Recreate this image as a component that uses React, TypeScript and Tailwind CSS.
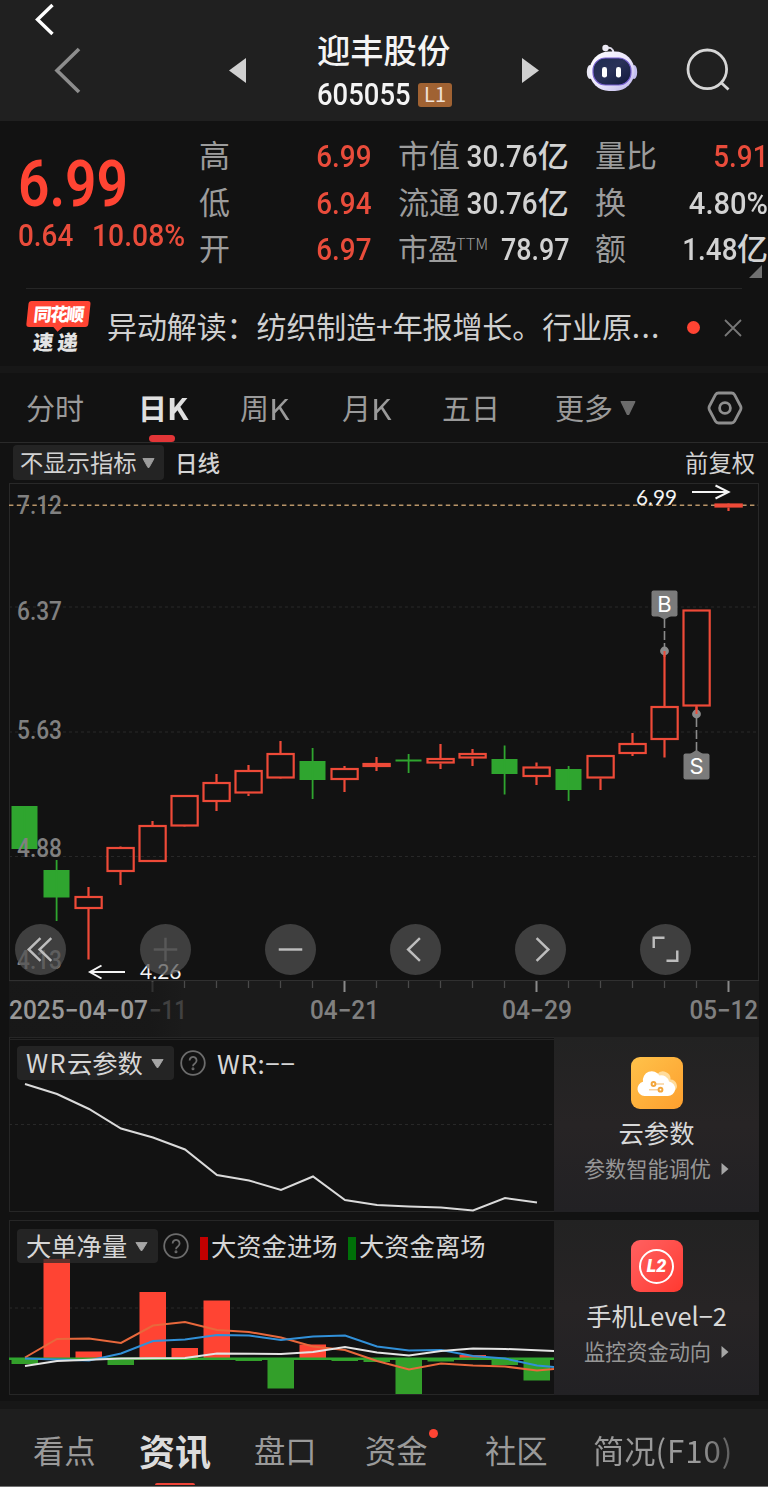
import React from 'react';

interface Candle {
     up: boolean;
     top: number;
     bottom: number;
     high: number;
     low: number;
}

interface NumProps {
     children: React.ReactNode;
     className?: string;
}

const STEP = 32;
const FIRST_X = 24.5;

const candles: Candle[] = [
     { up: false, top: 806, bottom: 849, high: 806, low: 849 },
     { up: false, top: 870, bottom: 897.5, high: 860, low: 921 },
     { up: true, top: 896, bottom: 909, high: 887, low: 959.5 },
     { up: true, top: 847, bottom: 872, high: 846.5, low: 885 },
     { up: true, top: 825, bottom: 862, high: 821, low: 862 },
     { up: true, top: 795, bottom: 826.5, high: 795, low: 826 },
     { up: true, top: 782, bottom: 802, high: 774, low: 811 },
     { up: true, top: 770, bottom: 793.5, high: 765, low: 796 },
     { up: true, top: 753, bottom: 778.5, high: 741, low: 779 },
     { up: false, top: 761, bottom: 780, high: 748, low: 799 },
     { up: true, top: 768, bottom: 780, high: 766, low: 792 },
     { up: true, top: 763, bottom: 767, high: 757, low: 771 },
     { up: false, top: 759.5, bottom: 761.5, high: 754, low: 773 },
     { up: true, top: 758, bottom: 763.5, high: 744, low: 769 },
     { up: true, top: 753, bottom: 758.5, high: 749, low: 766 },
     { up: false, top: 759, bottom: 774, high: 745.5, low: 794.5 },
     { up: true, top: 766.5, bottom: 777, high: 762.5, low: 785 },
     { up: false, top: 769, bottom: 790, high: 766, low: 801 },
     { up: true, top: 755, bottom: 778.5, high: 755, low: 790 },
     { up: true, top: 743, bottom: 754, high: 733, low: 756 },
     { up: true, top: 706, bottom: 740, high: 651, low: 757.5 },
     { up: true, top: 609.5, bottom: 706.5, high: 609.5, low: 714 },
     { up: true, top: 503.5, bottom: 507.5, high: 504, low: 511 },
];

const priceLabels = [
     { text: '7.12', y: 513.5 },
     { text: '6.37', y: 620 },
     { text: '5.63', y: 738.5 },
     { text: '4.88', y: 857 },
     { text: '4.13', y: 969 },
];

// bar edge away from the zero line
const flowBars = [1364, 1259, 1351.5, 1365, 1292, 1348, 1300.5, 1361, 1388.5, 1344.5, 1361, 1362, 1394, 1361.5, 1355, 1365, 1380.5];

const RED = '#ff4433';
const CANDLE_RED = '#ee4a38';
const GREEN = '#2fa52f';

const Num: React.FC<NumProps> = ({ children, className = '' }) => (
     <span className={`inline-block font-[Roboto,sans-serif] font-medium leading-none ${className}`}>{children}</span>
);

const Triangle: React.FC<{ className: string }> = ({ className }) => (
     <svg viewBox="0 0 14 10" preserveAspectRatio="none" className={className}>
          <path d="M1 0.5H13L7.6 9.5H6.4Z" fill="currentColor" stroke="currentColor" strokeLinejoin="round" />
     </svg>
);

const Help = () => (
     <svg viewBox="0 0 26 26" className="h-[26px] w-[26px] shrink-0 text-[#6c6c6c]" fill="none" stroke="currentColor" strokeWidth="1.8">
          <circle cx="13" cy="13" r="11.8" />
          <path d="M9.6 10.4a3.5 3.5 0 1 1 5.3 3c-1.3.8-1.9 1.3-1.9 2.8" />
          <circle cx="13" cy="18.8" r="0.6" />
     </svg>
);

const Robot = () => (
     <svg viewBox="0 0 52 50" className="h-[50px] w-[52px]">
          <defs>
               <linearGradient id="shell" x1="0" y1="0" x2="1" y2="1">
                    <stop offset="0" stopColor="#ffffff" />
                    <stop offset="0.55" stopColor="#e9e4fb" />
                    <stop offset="1" stopColor="#b9b2ea" />
               </linearGradient>
               <linearGradient id="visor" x1="0" y1="0" x2="1" y2="1">
                    <stop offset="0" stopColor="#1c2b4e" />
                    <stop offset="0.45" stopColor="#2a3158" />
                    <stop offset="1" stopColor="#10183c" />
               </linearGradient>
          </defs>
          <path d="M20 5c4-1 7 0 7.5 5" fill="none" stroke="#dedbe9" strokeWidth="2" />
          <circle cx="19.5" cy="5" r="3.2" fill="#eceaf5" />
          <ellipse cx="4" cy="29" rx="3.2" ry="7" fill="#e9e8f5" />
          <ellipse cx="48" cy="29" rx="3.2" ry="7" fill="#c4bff0" />
          <rect x="3.5" y="8.5" width="45" height="39.5" rx="19.5" fill="url(#shell)" />
          <rect x="7" y="15" width="38" height="27" rx="12.5" fill="url(#visor)" stroke="#765fd0" strokeWidth="1.2" />
          <rect x="16" y="24" width="5" height="10.5" rx="2.3" fill="#fff" />
          <rect x="30" y="24" width="5" height="10.5" rx="2.3" fill="#fff" />
     </svg>
);

const Header = () => (
     <header className="relative flex h-[121px] bg-[#202020]">
          <svg viewBox="0 0 120 121" className="h-[121px] w-[120px]" fill="none">
               <path d="M52.5 5L37.5 19.5L52.5 34" stroke="#fff" strokeWidth="3.4" />
               <path d="M79 49L57 70.5L79 92" stroke="#8d8d8d" strokeWidth="3.6" />
          </svg>
          <div className="flex w-[526px] items-center pt-[20px]">
               <svg viewBox="0 0 17 25" className="ml-[109px] h-[25px] w-[17px]"><path d="M17 0V25L0 12.5Z" fill="#d0d0d0" /></svg>
               <div className="ml-[71px] flex w-[135px] flex-col pt-[3px]">
                    <div className="whitespace-nowrap text-[33.3px] font-medium leading-[44px] text-[#f4f4f4]">迎丰股份</div>
                    <div className="flex h-[46px] items-center pt-[2px]">
                         <Num className="w-[101px] origin-left scale-x-[0.9] pt-px text-[30.5px] text-[#f4f4f4]">605055</Num>
                         <span className="flex h-[24px] w-[34px] shrink-0 items-center justify-center rounded-[3px] bg-[#a06232] pb-[2px] text-[20px] leading-none text-[#f0e3d8]">L1</span>
                    </div>
               </div>
               <svg viewBox="0 0 17 25" className="ml-[70px] h-[25px] w-[17px]"><path d="M0 0V25L17 12.5Z" fill="#d0d0d0" /></svg>
          </div>
          <div className="absolute left-[586px] top-[43px] flex items-start gap-[48px]">
               <Robot />
               <svg viewBox="0 0 44 44" className="mt-[5px] h-[44px] w-[44px]" fill="none" stroke="#d6d6d6" strokeWidth="2.8">
                    <circle cx="21.3" cy="21.3" r="19.3" />
                    <path d="M35 34.5L42.5 41.5" />
               </svg>
          </div>
     </header>
);

const label = 'whitespace-nowrap pb-[5px] text-[31px] leading-none text-[#9c9c9c]';
const unit = 'pb-[5px] text-[31px] font-medium leading-none';
const cell = 'flex h-[46.5px] items-center justify-between';
const digits = 'origin-right scale-x-[0.87] text-[32px]';

const Quote = () => (
     <section className="relative flex h-[167px] pt-[12px] text-[#d2d2d2]">
          <div className="flex w-[199px] flex-col pl-[18px] text-[#ff4433]">
               <Num className="mt-[20px] h-[63px] origin-left scale-x-[0.86] text-[64px] font-semibold leading-[60px]">6.99</Num>
               <div className="mt-[3px] flex text-[#e94c3b]">
                    <Num className="w-[74px] origin-left scale-x-[0.87] text-[32px]">0.64</Num>
                    <Num className="origin-left scale-x-[0.885] text-[32px]">10.08%</Num>
               </div>
          </div>
          <div className="w-[172px]">
               <div className={cell}><span className={label}>高</span><Num className={`${digits} text-[#e94c3b]`}>6.99</Num></div>
               <div className={cell}><span className={label}>低</span><Num className={`${digits} text-[#e94c3b]`}>6.94</Num></div>
               <div className={cell}><span className={label}>开</span><Num className={`${digits} text-[#e94c3b]`}>6.97</Num></div>
          </div>
          <div className="ml-[27px] w-[171px]">
               {['市值', '流通'].map((name) => (
                    <div key={name} className="flex h-[46.5px] items-center">
                         <span className={`${label} w-[58px]`}>{name}</span>
                         <Num className={digits}>30.76</Num>
                         <span className={unit}>亿</span>
                    </div>
               ))}
               <div className={cell}>
                    <span className={`${label} flex w-[90px] items-start`}>
                         <span className="text-[30px]">市盈</span>
                         <span className="-ml-[2px] pt-[3px] text-[16.5px] font-light leading-[17px]">TTM</span>
                    </span>
                    <Num className="origin-right scale-x-[0.84] text-[32px]">78.97</Num>
               </div>
          </div>
          <div className="ml-[26px] w-[173px]">
               <div className={cell}><span className={label}>量比</span><Num className={`${digits} text-[#e94c3b]`}>5.91</Num></div>
               <div className={cell}><span className={label}>换</span><Num className="origin-right scale-x-[0.91] text-[32px]">4.80%</Num></div>
               <div className={cell}>
                    <span className={label}>额</span>
                    <span className="flex items-center"><Num className={digits}>1.48</Num><span className={unit}>亿</span></span>
               </div>
          </div>
          <svg viewBox="0 0 13 13" className="absolute bottom-[10px] right-[6px] h-[13px] w-[13px]"><path d="M13 0V13H0Z" fill="#707070" /></svg>
     </section>
);

const News = () => (
     <section className="mx-[26px] flex h-[78px] items-center border-t border-[#262626]">
          <div className="w-[62px] -skew-x-[6deg] pb-[2px]">
               <div className="relative flex h-[26px] items-center justify-center rounded-[3px] bg-[#ff4433]">
                    <span className="whitespace-nowrap pb-[2px] text-[18px] font-black leading-none tracking-[-1.6px] text-white">同花顺</span>
                    <span className="absolute -bottom-[3px] left-[28px] h-[8px] w-[8px] rotate-45 bg-[#ff4433]" />
               </div>
               <div className="mt-[4px] flex justify-center gap-[4px] text-[20.5px] font-black leading-[21px] text-[#e4e4e4]"><span>速</span><span>递</span></div>
          </div>
          <p className="ml-[19px] w-[560px] whitespace-nowrap pb-[5px] text-[30px] leading-none tracking-[-0.1px] text-[#d0d0d0]">异动解读：纺织制造+年报增长。行业原<span className="tracking-[1.2px]">...</span></p>
          <span className="ml-[20px] h-[13px] w-[13px] shrink-0 rounded-full bg-[#ff4433]" />
          <svg viewBox="0 0 18 18" className="ml-auto h-[18px] w-[18px]" stroke="#777" strokeWidth="1.8"><path d="M1 1L17 17M17 1L1 17" /></svg>
     </section>
);

const Tabs = () => (
     <nav className="flex h-[70px] items-center whitespace-nowrap border-b border-[#2a2a2a] pl-[26px] text-[29px] leading-none text-[#9a9a9a]">
          <span className="w-[112px]">分时</span>
          <span className="relative w-[102px] font-bold text-[#e0e0e0]">
               日<span className="inline-block origin-left scale-x-[1.08]">K</span>
               <span className="absolute -bottom-[20px] left-[11px] h-[7px] w-[26px] rounded-full bg-[#e23537]" />
          </span>
          <span className="w-[102px]">周<span className="inline-block origin-left scale-x-[1.1]">K</span></span>
          <span className="w-[100px]">月<span className="inline-block origin-left scale-x-[1.1]">K</span></span>
          <span className="w-[113px]">五日</span>
          <span className="flex w-[152px] items-center">更多<Triangle className="ml-[7px] h-[14px] w-[16px] text-[#6c6c6c]" /></span>
          <svg viewBox="0 0 36 34" className="h-[34px] w-[36px]" fill="none" stroke="#8e8e8e" strokeWidth="2.8" strokeLinejoin="round">
               <path d="M11.5 2H24.5Q26.5 2 27.5 3.7L33.5 15Q34.5 17 33.5 19L27.5 30.3Q26.5 32 24.5 32H11.5Q9.5 32 8.5 30.3L2.5 19Q1.5 17 2.5 15L8.5 3.7Q9.5 2 11.5 2Z" />
               <circle cx="18" cy="17" r="5.4" />
          </svg>
     </nav>
);

const CandleShape: React.FC<{ candle: Candle; x: number }> = ({ candle, x }) => {
     const { up, top, bottom, high, low } = candle;
     if (!up) {
          return (
               <g fill={GREEN}>
                    <rect x={x - 13} y={top} width="26" height={bottom - top} />
                    <rect x={x - 0.8} y={high} width="1.8" height={low - high} />
               </g>
          );
     }
     return (
          <g stroke={CANDLE_RED} strokeWidth="2.2" fill="none">
               <rect x={x - 13} y={top + 1} width="26.2" height={bottom - top - 2} />
               <path d={`M${x} ${high}V${top}M${x} ${bottom}V${low}`} />
          </g>
     );
};

const KLineChart = () => (
     <svg viewBox="9 483 750 554" className="block h-[554px] w-[750px] font-[Roboto,sans-serif]">
          <defs>
               <linearGradient id="axisShade" x1="0" x2="1">
                    <stop offset="0" stopColor="#141414" />
                    <stop offset="0.8" stopColor="#141414" />
                    <stop offset="1" stopColor="#1b1b1b" />
               </linearGradient>
          </defs>
          <rect x="9" y="981" width="750" height="56" fill="#1b1b1b" />
          <rect x="9.5" y="483.5" width="749" height="497" fill="none" stroke="#282828" />
          <path d="M9 607H758M9 732H758M9 856.5H758" stroke="#282828" strokeDasharray="3 3" />
          <path d="M9 505.3H758" stroke="#b99569" strokeWidth="1.4" strokeDasharray="4.4 3.4" />
          {candles.map((candle, i) => <CandleShape key={i} candle={candle} x={FIRST_X + i * STEP} />)}
          <g fontSize="25" fontWeight="500" fill="#808080">
               {priceLabels.map(({ text, y }) => (
                    <text key={text} x="17" y={y} textLength="45" lengthAdjust="spacingAndGlyphs">{text}</text>
               ))}
          </g>
          <g fill="none" stroke="#8b8b8b" strokeWidth="1.6" strokeDasharray="9 3">
               <path d="M664.5 619V648M696.5 718V751" />
          </g>
          <circle cx="664.5" cy="651" r="4.4" fill="#8b8b8b" />
          <circle cx="696.5" cy="714" r="4.4" fill="#8b8b8b" />
          <path d="M664.5 651V657M696.5 706V714" stroke={CANDLE_RED} strokeWidth="2" />
          <g fill="#7b7b7b">
               <rect x="651.5" y="590.5" width="26" height="26" rx="2" />
               <path d="M658 616H671L664.5 619.5Z" />
               <rect x="683.5" y="753.5" width="26" height="26" rx="2" />
               <path d="M690 754H703L696.5 750Z" />
          </g>
          <g fill="#fff" fontFamily="Inter" fontSize="22" textAnchor="middle">
               <text x="664.5" y="611.5">B</text>
               <text x="696.5" y="774">S</text>
          </g>
          <g fill="#f4f4f4" fontFamily="Lato" fontSize="22">
               <text x="636" y="504.5" textLength="41" lengthAdjust="spacingAndGlyphs">6.99</text>
               <text x="140" y="979" textLength="41.5" lengthAdjust="spacingAndGlyphs">4.26</text>
          </g>
          <path d="M692 492H728M715.5 485.5L728.5 492L715.5 498.5M125 972H90M101.5 965.5L90 972L101.5 978.5" fill="none" stroke="#f4f4f4" strokeWidth="2" />
          <path d="M9 980.5H759" stroke="#303030" />
          {Array.from({ length: 19 }, (_, i) => (
               <path key={i} d={`M${152.5 + i * STEP} 981V${i % 6 === 0 ? 992 : 988}`} stroke={i % 6 === 0 && i > 0 ? '#8a8a8a' : '#4a4a4a'} strokeWidth={i % 6 === 0 ? 2 : 1.3} />
          ))}
          <g fontSize="25" fontWeight="500" fill="#808080">
               <text x="149" y="1019" textLength="38" lengthAdjust="spacingAndGlyphs" fill="#616161">−11</text>
               <rect x="9" y="982" width="174" height="55" fill="url(#axisShade)" opacity="0.45" />
               <text x="9" y="1019" textLength="139" lengthAdjust="spacingAndGlyphs" fill="#989898">2025−04−07</text>
               <text x="310" y="1019" textLength="69" lengthAdjust="spacingAndGlyphs">04−21</text>
               <text x="502" y="1019" textLength="70" lengthAdjust="spacingAndGlyphs">04−29</text>
               <text x="689.5" y="1019" textLength="68.5" lengthAdjust="spacingAndGlyphs">05−12</text>
          </g>
     </svg>
);

const controls = [
     { name: 'first', d: 'M26 14.5L14 26L26 37.5M37 14.5L25 26L37 37.5' },
     { name: 'zoom in', d: 'M14 26H38M26 14V38' },
     { name: 'zoom out', d: 'M14 26H38' },
     { name: 'previous', d: 'M30.5 14.5L18.5 26L30.5 37.5' },
     { name: 'next', d: 'M22 14.5L34 26L22 37.5' },
     { name: 'full screen', d: 'M14 24.5V14H25M38 27V37.5H27' },
];

const ChartPanel = () => (
     <section className="relative mx-[9px]">
          <KLineChart />
          <div className="absolute left-[6px] top-[441px] flex gap-[74px]">
               {controls.map(({ name, d }) => (
                    <button key={name} aria-label={name} className="h-[51px] w-[51px] rounded-full bg-[#515151]/72">
                         <svg viewBox="0 0 52 52" fill="none" stroke={name === 'zoom in' ? '#585858' : '#bdbdbd'} strokeWidth="2.5">
                              <path d={d} />
                         </svg>
                    </button>
               ))}
          </div>
     </section>
);

const Pill: React.FC<{ children: React.ReactNode; className: string }> = ({ children, className }) => (
     <span className={`flex h-[34px] shrink-0 items-center justify-between whitespace-nowrap rounded-[4px] bg-[#2b2b2b]/75 pl-[9px] pr-[10px] ${className}`}>
          <span className="pb-px">{children}</span>
          <Triangle className="h-[9px] w-[13px] text-[#a6a6a6]" />
     </span>
);

interface PromoProps {
     title: string;
     note: string;
     icon: React.ReactNode;
}

const Promo: React.FC<PromoProps> = ({ title, note, icon }) => (
     <aside className="flex w-[205px] flex-col items-center bg-linear-to-b from-[#222222] via-[#272425] to-[#222124] pt-[20px]">
          {icon}
          <div className="mt-[5px] whitespace-nowrap text-[25.3px] leading-[36px] text-[#d8d8d8]">{title}</div>
          <div className="flex items-center whitespace-nowrap text-[21.2px] leading-[35px] text-[#969696]">
               {note}
               <svg viewBox="0 0 8 14" className="ml-[10px] mt-[2px] h-[14px] w-[8px]"><path d="M0.5 1L7.5 7L0.5 13Z" fill="#a6a6a6" /></svg>
          </div>
     </aside>
);

const CloudIcon = () => (
     <svg viewBox="0 0 52 52" className="h-[52px] w-[52px] shrink-0">
          <defs>
               <linearGradient id="cloudBg" x1="0" y1="0" x2="1" y2="1">
                    <stop offset="0" stopColor="#ffc24a" />
                    <stop offset="1" stopColor="#fd9f2e" />
               </linearGradient>
          </defs>
          <rect width="52" height="52" rx="9" fill="url(#cloudBg)" />
          <path d="M26 17.5a7.500 7.500 0 0 1 13.500 5a6.500 6.500 0 0 1 4 11.500H28Z" fill="#ffdc9c" />
          <path d="M13.500 39A7.200 7.200 0 0 1 12 24.800A9 9 0 0 1 28.500 18.500A8 8 0 0 1 38 24.500A7.300 7.300 0 0 1 36.500 39Z" fill="#fff" />
          <g stroke="#f3a63c" fill="none">
               <path d="M25 27H33M18 32.7H27" strokeWidth="1.5" opacity="0.5" />
               <circle cx="22.5" cy="27" r="1.9" strokeWidth="2" />
               <circle cx="29.5" cy="32.7" r="1.9" strokeWidth="2" />
          </g>
     </svg>
);

const Level2Icon = () => (
     <div className="flex h-[52px] w-[52px] shrink-0 items-center justify-center rounded-[9px] bg-linear-to-br from-[#ff6060] to-[#ff382f]">
          <div className="flex h-[35px] w-[35px] items-center justify-center rounded-full border-[2px] border-white font-[Roboto,sans-serif] text-[18px] font-black italic leading-none text-white">L2</div>
     </div>
);

const wrPoints = '25,1084 57,1094 89,1109 121,1128.5 153,1137.5 185,1149.5 217,1175 249,1180.5 281,1190 313,1176.5 345,1200 377,1205 409,1206.5 441,1207.5 473,1210.5 505,1198 537,1202.5';

const WrPanel = () => (
     <section className="mx-[9px] flex h-[175px]">
          <div className="relative w-[545px] border border-r-0 border-[#262626]">
               <svg viewBox="9 1037 545 175" className="absolute -left-px -top-px h-[175px] w-[545px]" fill="none">
                    <path d="M9 1039.5H554" stroke="#242424" />
                    <path d="M9 1124.5H554" stroke="#282828" strokeDasharray="3 3" />
                    <polyline points={wrPoints} stroke="#dadada" strokeWidth="2" />
               </svg>
               <div className="relative flex items-center pl-[7px] pt-[8px] text-[25.3px] leading-none text-[#d6d6d6]">
                    <Pill className="w-[157px]"><span className="tracking-[1.3px]">WR</span>云参数</Pill>
                    <span className="ml-[6px] flex"><Help /></span>
                    <span className="ml-[11px] pb-px text-[26px] tracking-[0.6px]">WR:−−</span>
               </div>
          </div>
          <Promo title="云参数" note="参数智能调优" icon={<CloudIcon />} />
     </section>
);

const FlowPanel = () => (
     <section className="mx-[9px] mt-[8px] flex h-[175px]">
          <div className="relative w-[545px] border border-r-0 border-[#262626]">
               <svg viewBox="9 1220 545 175" className="absolute -left-px -top-px h-[175px] w-[545px]" fill="none">
                    <path d="M9 1308H554" stroke="#282828" strokeDasharray="3 3" />
                    {flowBars.map((edge, i) => (
                         <rect key={i} x={11.5 + i * STEP} y={Math.min(edge, 1359)} width="26.5" height={Math.abs(edge - 1359)} fill={edge < 1359 ? RED : '#339f2a'} />
                    ))}
                    <path d="M9 1358.8H554" stroke={GREEN} strokeWidth="2.6" />
                    <g strokeWidth="2">
                         <polyline stroke="#e8683c" points="25,1357.5 57,1339 89,1338.5 121,1343 153,1325.5 185,1322 217,1330 249,1332 281,1337.5 313,1346.5 345,1350 377,1361 409,1369.5 441,1363.5 473,1365.5 505,1366.5 537,1370.5 554,1369" />
                         <polyline stroke="#3190d8" points="25,1358.5 89,1360.5 121,1353.5 153,1341 185,1339.5 217,1335 249,1335.5 281,1340 313,1336.5 345,1335.5 377,1346.5 409,1350.5 441,1350 473,1356 505,1358.5 537,1365.5 554,1367" />
                         <polyline stroke="#e4e4e4" points="25,1366 57,1361 121,1358.5 185,1358 217,1353.5 281,1354 313,1352 345,1347 377,1352.5 409,1355.5 441,1351 473,1348.5 505,1349 554,1351" />
                    </g>
               </svg>
               <div className="relative flex items-center whitespace-nowrap pl-[7px] pt-[8px] text-[25.3px] leading-none text-[#d6d6d6]">
                    <Pill className="w-[141px]">大单净量</Pill>
                    <span className="ml-[5px] flex"><Help /></span>
                    <span className="ml-[11px] mt-[5px] h-[23px] w-[8px] bg-[#c40000]" />
                    <span className="ml-[3px] w-[127px] pb-px">大资金进场</span>
                    <span className="ml-[10px] mt-[5px] h-[23px] w-[8px] bg-[#007008]" />
                    <span className="ml-[3px] pb-px">大资金离场</span>
               </div>
          </div>
          <Promo title="手机Level−2" note="监控资金动向" icon={<Level2Icon />} />
     </section>
);

const Footer = () => (
     <footer className="mt-[6px] border-t-8 border-[#171717] bg-[#1e1e1e]">
          <div className="flex h-[78px] items-center whitespace-nowrap border-b border-[#707070] pb-[3px] pl-[33px] pt-[8px] text-[31.3px] leading-none text-[#9a9a9a]">
               <span className="w-[106px]">看点</span>
               <span className="relative w-[115px] text-[36px] font-bold text-[#dcdcdc]">
                    资讯
                    <span className="absolute -bottom-[17px] left-[16px] h-[2px] w-[40px] rounded-t bg-[#f04438]" />
               </span>
               <span className="w-[111px]">盘口</span>
               <span className="relative w-[120px]">
                    资金
                    <span className="absolute -top-[5px] left-[64px] h-[9px] w-[9px] rounded-full bg-[#ff4433]" />
               </span>
               <span className="w-[108px]">社区</span>
               <span className="bg-linear-to-r from-[#9a9a9a] from-75% to-[#5a5a5a] bg-clip-text py-[6px] text-transparent">简况<span className="tracking-[0.9px]">(F10)</span></span>
          </div>
     </footer>
);

export default function App() {
     return (
          <main className="h-[1487px] w-[768px] overflow-hidden bg-[#121212] font-['Noto_Sans_CJK_SC',sans-serif]">
               <Header />
               <Quote />
               <News />
               <div className="h-[7px] bg-[#171717]" />
               <Tabs />
               <div className="flex h-[40px] items-center whitespace-nowrap pb-px pl-[13px] pr-[13px] text-[23.3px] leading-none text-[#d2d2d2]">
                    <span className="flex h-[35px] w-[151px] items-center rounded-[4px] bg-[#242424] pl-[7px]">
                         不显示指标
                         <Triangle className="ml-[6px] h-[10px] w-[13px] text-[#9c9c9c]" />
                    </span>
                    <span className="ml-[11px] text-[22.5px] font-medium">日线</span>
                    <span className="ml-auto">前复权</span>
               </div>
               <ChartPanel />
               <WrPanel />
               <FlowPanel />
               <Footer />
          </main>
     );
}
